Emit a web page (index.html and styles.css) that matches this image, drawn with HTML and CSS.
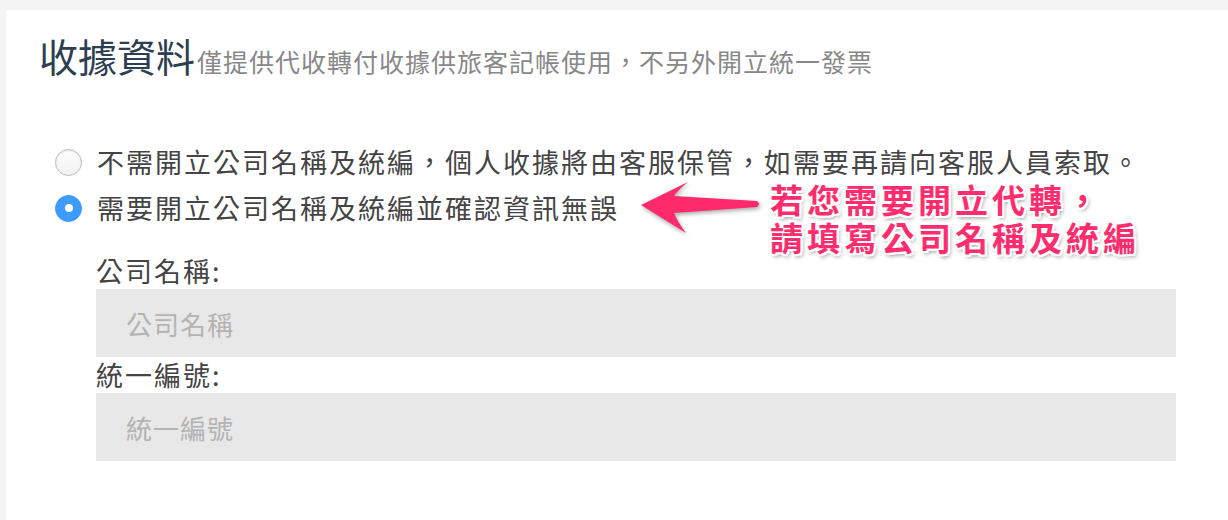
FILE: index.html
```html
<!DOCTYPE html>
<html lang="zh-Hant">
<head>
<meta charset="utf-8">
<title>收據資料</title>
<link rel="stylesheet" href="styles.css">
</head>
<body>
<div class="card">
  <div class="head">
    <h1 class="title">收據資料</h1>
    <span class="subtitle">僅提供代收轉付收據供旅客記帳使用，不另外開立統一發票</span>
  </div>
  <div class="options">
    <label class="option">
      <span class="radio"></span>
      <span class="opt-text">不需開立公司名稱及統編，個人收據將由客服保管，如需要再請向客服人員索取。</span>
    </label>
    <label class="option">
      <span class="radio checked"></span>
      <span class="opt-text">需要開立公司名稱及統編並確認資訊無誤</span>
    </label>
  </div>
  <div class="form">
    <div class="field-label">公司名稱:</div>
    <input class="field-input" type="text" placeholder="公司名稱">
    <div class="field-label">統一編號:</div>
    <input class="field-input" type="text" placeholder="統一編號">
  </div>
  <div class="note">
    <svg class="arrow" width="140" height="72" viewBox="0 0 140 72">
      <path d="M11,35 L58,12 Q47,21 44,26 L127,31 Q131,34 127,37 L44,43 Q47,51 56,63 Z" fill="#ff2a6b"/>
    </svg>
    <div class="note-text">
      <div class="note-line">若您需要開立代轉，</div>
      <div class="note-line">請填寫公司名稱及統編</div>
    </div>
  </div>
</div>
</body>
</html>
```

FILE: styles.css
```css
* { box-sizing: border-box; }
html, body {
  margin: 0;
  padding: 0;
  background: #f4f4f4;
  font-family: "Noto Sans CJK TC", "Noto Sans", sans-serif;
}
.card {
  position: relative;
  margin: 10px 0 0 6px;
  background: #fff;
  height: 510px;
  padding: 22px 52px 0 33px;
}
.head {
  display: flex;
  align-items: baseline;
}
.title {
  margin: 0;
  font-size: 39px;
  line-height: 46px;
  font-weight: 400;
  color: #2c3e50;
}
.subtitle {
  font-size: 25px;
  letter-spacing: 1px;
  color: #888;
  margin-left: 2px;
}
.options {
  margin-top: 60px;
  padding-left: 16px;
  display: flex;
  flex-direction: column;
}
.option {
  display: flex;
  align-items: center;
  height: 46px;
}
.radio {
  width: 27px;
  height: 27px;
  border-radius: 50%;
  border: 1px solid #bdbdbd;
  background: linear-gradient(#ffffff, #f1f1f1);
  box-shadow: inset 0 1px 2px rgba(0,0,0,0.1);
  margin-right: 15px;
  flex: none;
  display: flex;
  align-items: center;
  justify-content: center;
}
.radio.checked {
  background: #3d9bfd;
  border-color: #3d9bfd;
  box-shadow: none;
}
.radio.checked::after {
  content: "";
  width: 8px;
  height: 8px;
  border-radius: 50%;
  background: #fff;
}
.opt-text {
  font-size: 27px;
  line-height: 32px;
  letter-spacing: 2px;
  color: #444;
  white-space: nowrap;
}
.form {
  margin-top: 22px;
  padding-left: 57px;
  display: flex;
  flex-direction: column;
}
.field-label {
  font-size: 27px;
  line-height: 36px;
  letter-spacing: 2px;
  color: #444;
}
.field-input {
  display: block;
  width: 1080px;
  height: 68px;
  border: 0;
  outline: 0;
  background: #e8e8e8;
  padding: 0 0 0 30px;
  font-family: inherit;
  font-size: 26px;
  letter-spacing: 1px;
  color: #444;
}
.field-input::placeholder {
  color: #b3b3b3;
  letter-spacing: 1px;
}
.note {
  position: absolute;
  left: 624px;
  top: 160px;
  display: flex;
  align-items: flex-start;
}
.arrow {
  filter: drop-shadow(1px 2px 2px rgba(0,0,0,0.35));
}
.note-text {
  margin-top: 13px;
  display: flex;
  flex-direction: column;
  gap: 5px;
}
.note-line {
  font-size: 33px;
  line-height: 33px;
  font-weight: 700;
  letter-spacing: 4px;
  color: #ff2d6d;
  white-space: nowrap;
  text-shadow:
    -2px 0 0 #fff, 2px 0 0 #fff, 0 -2px 0 #fff, 0 2px 0 #fff,
    -2px -2px 0 #fff, 2px 2px 0 #fff, -2px 2px 0 #fff, 2px -2px 0 #fff,
    2px 3px 4px rgba(0,0,0,0.45);
}
```
